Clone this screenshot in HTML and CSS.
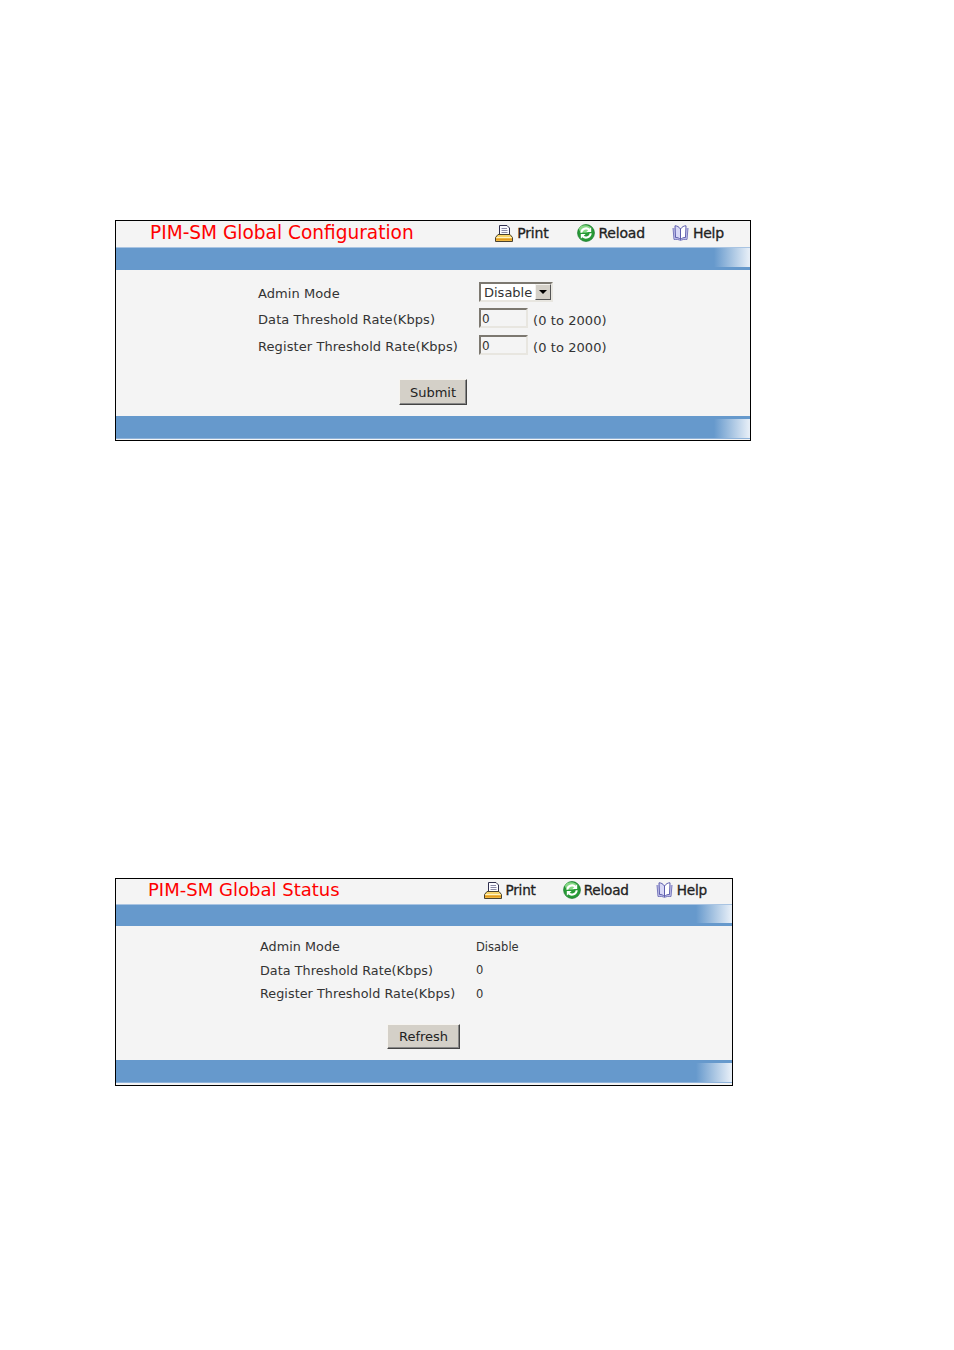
FILE: index.html
```html
<!DOCTYPE html>
<html lang="en">
<head>
<meta charset="utf-8">
<title>PIM-SM Global</title>
<link rel="stylesheet" href="styles.css">
</head>
<body>
<svg class="defs" width="0" height="0" aria-hidden="true">
  <defs>
    <symbol id="i-print" viewBox="0 0 18 17">
      <path d="M4.500.5h7.500l2.500 2.500v6.500h-10z" fill="#fbfbff" stroke="#30304e" stroke-width="1"/>
      <path d="M6.500 3.500h5.500M6.500 5.500h6M6.500 7.500h6" stroke="#8a8aa6" stroke-width="1"/>
      <path d="M3 9.500h12l2.500 3v4H.5v-4z" fill="#f8d468" stroke="#4a4230" stroke-width="1"/>
      <path d="M1.500 12.500h15" stroke="#fff4c4" stroke-width="1"/>
      <path d="M1 14.500h16" stroke="#e59a1c" stroke-width="2"/>
    </symbol>
    <symbol id="i-reload" viewBox="0 0 18 18">
      <circle cx="9" cy="9" r="8.400" fill="#279a35" stroke="#1c7d2e" stroke-width="0.800"/>
      <ellipse cx="8" cy="5" rx="6" ry="3.800" fill="#86d886"/>
      <path d="M4.300 8.800a4.700 4.700 0 0 1 8-3" fill="none" stroke="#fff" stroke-width="2"/>
      <path d="M14.200 3.200v4.800h-4.800z" fill="#fff"/>
      <path d="M13.700 9.200a4.700 4.700 0 0 1-8 3" fill="none" stroke="#fff" stroke-width="2"/>
      <path d="M3.800 14.800v-4.800h4.800z" fill="#fff"/>
    </symbol>
    <symbol id="i-help" viewBox="0 0 17 16">
      <path d="M1 3 2 14.500c2.500-.3 5 0 6.500 1 1.500-1 4-1.300 6.500-1L16 3" fill="#c8c8ee" stroke="#7878bc" stroke-width="1"/>
      <path d="M8.500 4C7 1.800 5 .8 3 .8L3.500 12.500c2 0 3.800.5 5 2z" fill="#d8d8f6" stroke="#5c5cac" stroke-width="1"/>
      <path d="M8.500 4c1.500-2.200 3.500-3.200 5.500-3.200L13.500 12.500c-2 0-3.800.5-5 2z" fill="#fff" stroke="#5c5cac" stroke-width="1"/>
    </symbol>
  </defs>
</svg>

<main class="page">
  <section class="panel panel-config">
    <header class="head">
      <h1 class="title">PIM-SM Global Configuration</h1>
      <nav class="tools">
        <a class="tool tool-print"><svg class="ic ic-print"><use href="#i-print"/></svg>Print</a>
        <a class="tool"><svg class="ic ic-reload"><use href="#i-reload"/></svg>Reload</a>
        <a class="tool"><svg class="ic ic-help"><use href="#i-help"/></svg>Help</a>
      </nav>
    </header>
    <div class="band band-top"></div>
    <form class="body">
      <div class="grid">
        <div class="row">
          <span class="label">Admin Mode</span>
          <span class="select"><span class="select-text">Disable</span><span class="select-btn"><i class="arrow"></i></span></span>
        </div>
        <div class="row">
          <span class="label">Data Threshold Rate(Kbps)</span>
          <span class="input">0</span><span class="hint">(0 to 2000)</span>
        </div>
        <div class="row">
          <span class="label">Register Threshold Rate(Kbps)</span>
          <span class="input">0</span><span class="hint">(0 to 2000)</span>
        </div>
      </div>
      <div class="actions"><button type="button" class="btn">Submit</button></div>
    </form>
    <div class="band band-bottom"></div>
  </section>

  <section class="panel panel-status">
    <header class="head">
      <h1 class="title">PIM-SM Global Status</h1>
      <nav class="tools">
        <a class="tool"><svg class="ic ic-print"><use href="#i-print"/></svg>Print</a>
        <a class="tool"><svg class="ic ic-reload"><use href="#i-reload"/></svg>Reload</a>
        <a class="tool"><svg class="ic ic-help"><use href="#i-help"/></svg>Help</a>
      </nav>
    </header>
    <div class="band band-top"></div>
    <div class="body">
      <div class="grid">
        <div class="row"><span class="label">Admin Mode</span><span class="value">Disable</span></div>
        <div class="row"><span class="label">Data Threshold Rate(Kbps)</span><span class="value">0</span></div>
        <div class="row"><span class="label">Register Threshold Rate(Kbps)</span><span class="value">0</span></div>
      </div>
      <div class="actions"><button type="button" class="btn">Refresh</button></div>
    </div>
    <div class="band band-bottom"></div>
  </section>
</main>
</body>
</html>
```
FILE: styles.css
```css
html, body { margin: 0; padding: 0; background: #fff; }
body { font-family: "DejaVu Sans", Verdana, sans-serif; color: #333; }
.defs { position: absolute; }
.page { padding: 220px 0 0 115px; }

.panel { box-sizing: border-box; border: 1px solid #000; background: #f4f4f4; display: flex; flex-direction: column; }
.panel-config { width: 636px; height: 221px; margin-bottom: 437px; padding-bottom: 1px; }
.panel-status { width: 618px; height: 208px; padding-bottom: 2px; }

.head { box-sizing: border-box; display: flex; align-items: center; flex: none; }
.panel-config .head { height: 26px; padding: 0 26px 2px 34px; }
.panel-status .head { height: 25px; padding: 0 25px 3px 32px; }
.title { margin: 0; font-weight: 400; color: #f00; white-space: nowrap; }
.panel-config .title { font-size: 18.550px; padding-bottom: 2px; }
.panel-status .title { font-size: 18.050px; padding-bottom: 2px; }

.tools { display: flex; align-items: center; margin-left: auto; gap: 27px; }
.tool { display: flex; align-items: center; font-size: 14px; color: #222; -webkit-text-stroke: .3px #222; letter-spacing: -.2px; line-height: 18px; }
.tool-print { margin-right: 2px; }
.tool-print .ic { margin-right: 4px; }
.panel-status .tool { font-size: 13.600px; }
.ic { display: block; flex: none; margin-right: 3px; }
.ic-print { width: 18px; height: 17px; }
.ic-reload { width: 18px; height: 18px; }
.ic-help { width: 17px; height: 16px; margin-right: 4px; }

.band { flex: none; height: 23px; box-sizing: border-box; background-color: #6699cc; background-repeat: no-repeat; }
.band-top { border-top: 1px solid #a9c4e2; background-image: linear-gradient(#6699cc, #6699cc), linear-gradient(90deg, #6699cc 0, #6699cc calc(100% - 36px), #e6eef7 calc(100% - 1px)); background-size: 100% 3px, 100% 100%; background-position: bottom, top; }
.band-bottom { border-bottom: 1px solid #8fb3da; background-image: linear-gradient(#6699cc, #6699cc), linear-gradient(90deg, #6699cc 0, #6699cc calc(100% - 36px), #e6eef7 calc(100% - 1px)); background-size: 100% 3px, 100% 100%; background-position: top, bottom; }
.panel-status .band-top { height: 22px; }

.body { flex: 1; display: flex; flex-direction: column; }
.grid { display: grid; }
.row { display: flex; align-items: center; }
.label { flex: none; font-size: 13px; white-space: nowrap; }
.panel-config .grid { padding: 9px 0 0 142px; grid-template-rows: 26px 26px 28px; }
.panel-config .label { width: 221px; padding-top: 2px; letter-spacing: .08px; }
.panel-status .grid { padding: 9px 0 0 144px; grid-template-rows: 23.500px 23.500px 23.500px; }
.panel-status .label { width: 216px; font-size: 12.750px; letter-spacing: .05px; }
.value { font-size: 11.500px; }

.select { box-sizing: border-box; width: 74px; height: 20px; display: flex; align-items: center; background: #fff; border: 2px solid; border-color: #7c7870 #e8e6e0 #e8e6e0 #7c7870; font-size: 13px; padding-left: 3px; }
.select-text { flex: 1; }
.select-btn { box-sizing: border-box; width: 16px; height: 16px; background: #d4d0c8; border: 1px solid; border-color: #f4f2ee #555 #555 #f4f2ee; display: flex; align-items: center; justify-content: center; }
.arrow { display: block; width: 0; height: 0; border: 4px solid transparent; border-top: 4px solid #000; border-bottom: 0; }

.input { box-sizing: border-box; width: 49px; height: 20px; background: #f4f4f4; border: 2px solid; border-color: #7c7870 #e8e6e0 #e8e6e0 #7c7870; font-size: 12px; line-height: 18px; padding-left: 1px; }
.hint { font-size: 13px; margin-left: 5px; padding-top: 4px; letter-spacing: .08px; }

.actions { display: flex; justify-content: center; }
.panel-config .actions { padding-top: 20px; }
.panel-status .actions { padding: 18px 1px 0 0; }
.btn { box-sizing: border-box; background: #d4d0c8; border: 1px solid; border-color: #f6f4f0 #444 #444 #f6f4f0; box-shadow: inset -1px -1px 0 #888; font: 13px "DejaVu Sans", Verdana, sans-serif; color: #222; padding: 0; }
.panel-config .btn { width: 68px; height: 26px; }
.panel-status .btn { width: 73px; height: 25px; }
```
